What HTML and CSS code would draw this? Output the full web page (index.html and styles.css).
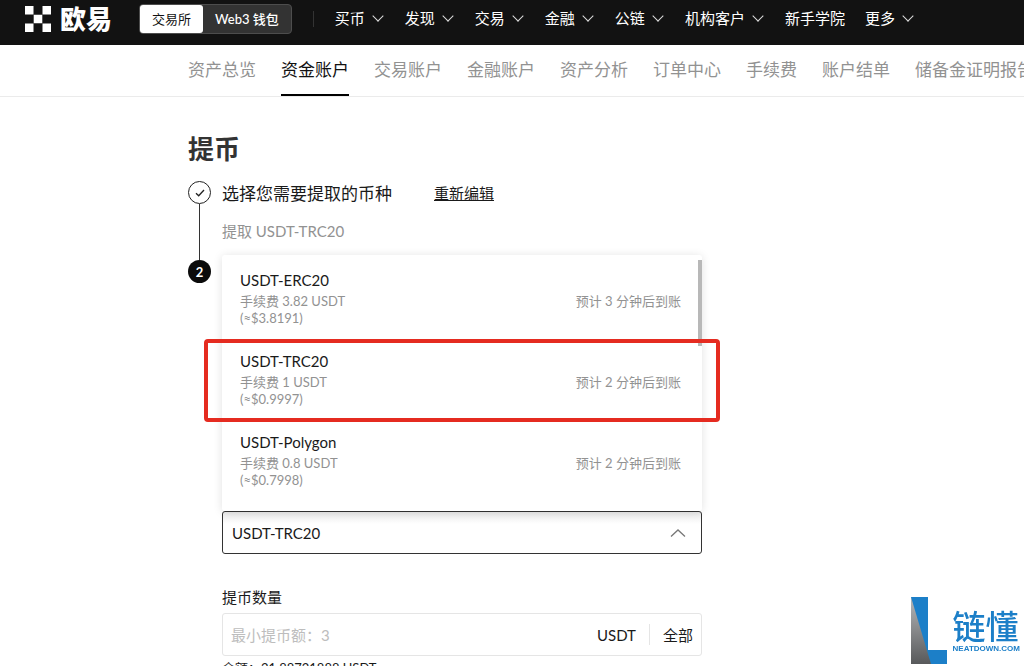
FILE: index.html
```html
<!DOCTYPE html>
<html lang="zh-CN">
<head>
    <meta charset="UTF-8">
    <meta name="viewport" content="width=device-width, initial-scale=1.0">
    <title>提币</title>
    <link rel="stylesheet" href="styles.css">
</head>
<body>

    <!-- Top bar -->
    <header class="topbar">
        <a href="#" class="logo">
            <svg width="26" height="26" viewBox="0 0 26 26" fill="#fff" aria-hidden="true">
                <path d="M0 0h8.500v8.500H0zM17.500 0H26v8.500h-8.500zM8.700 8.700h8.600v8.600H8.700zM0 17.500h8.500V26H0zM17.500 17.500H26V26h-8.500z"/>
            </svg>
            <span>欧易</span>
        </a>
        <div class="switch">
            <button class="on">交易所</button>
            <button>Web3 钱包</button>
        </div>
        <span class="divider"></span>
        <nav class="menu">
            <a href="#" class="has-sub">买币</a>
            <a href="#" class="has-sub">发现</a>
            <a href="#" class="has-sub">交易</a>
            <a href="#" class="has-sub">金融</a>
            <a href="#" class="has-sub">公链</a>
            <a href="#" class="has-sub">机构客户</a>
            <a href="#">新手学院</a>
            <a href="#" class="has-sub">更多</a>
        </nav>
    </header>

    <!-- Asset tabs -->
    <nav class="tabs">
        <a href="#">资产总览</a>
        <a href="#" class="active">资金账户</a>
        <a href="#">交易账户</a>
        <a href="#">金融账户</a>
        <a href="#">资产分析</a>
        <a href="#">订单中心</a>
        <a href="#">手续费</a>
        <a href="#">账户结单</a>
        <a href="#">储备金证明报告</a>
    </nav>

    <main class="page">
        <h1>提币</h1>

        <!-- Step 1 -->
        <section class="step">
            <div class="rail">
                <span class="dot done">
                    <svg width="12" height="12" viewBox="0 0 12 12" fill="none" stroke="#222" stroke-width="1.300" aria-hidden="true">
                        <path d="M2 6.300l2.700 2.500L10 3"/>
                    </svg>
                </span>
                <span class="line"></span>
            </div>
            <div class="step-body">
                <div class="step-head">
                    <h2>选择您需要提取的币种</h2>
                    <a href="#">重新编辑</a>
                </div>
                <p class="summary">提取 USDT-TRC20</p>
            </div>
        </section>

        <!-- Step 2 -->
        <section class="step">
            <div class="rail">
                <span class="dot">2</span>
            </div>
            <div class="step-body form">
                <ul class="networks">
                    <li>
                        <div>
                            <h3>USDT-ERC20</h3>
                            <p>手续费 3.82 USDT</p>
                            <p>(≈$3.8191)</p>
                        </div>
                        <span>预计 3 分钟后到账</span>
                    </li>
                    <li class="marked">
                        <div>
                            <h3>USDT-TRC20</h3>
                            <p>手续费 1 USDT</p>
                            <p>(≈$0.9997)</p>
                        </div>
                        <span>预计 2 分钟后到账</span>
                    </li>
                    <li>
                        <div>
                            <h3>USDT-Polygon</h3>
                            <p>手续费 0.8 USDT</p>
                            <p>(≈$0.7998)</p>
                        </div>
                        <span>预计 2 分钟后到账</span>
                    </li>
                </ul>
                <div class="select">
                    <select aria-label="提币网络">
                        <option>USDT-ERC20</option>
                        <option selected>USDT-TRC20</option>
                        <option>USDT-Polygon</option>
                    </select>
                    <svg width="16" height="10" viewBox="0 0 16 10" fill="none" stroke="#777" stroke-width="1.300" aria-hidden="true">
                        <path d="M1 8.500L8 2l7 6.500"/>
                    </svg>
                </div>

                <label class="amount-label" for="amount">提币数量</label>
                <div class="amount">
                    <input type="text" id="amount" placeholder="最小提币额：3">
                    <span>USDT</span>
                    <button>全部</button>
                </div>
                <p class="balance">余额：21.88721888 USDT</p>
            </div>
        </section>
    </main>

    <!-- Site mark -->
    <div class="mark">
        <svg width="37" height="67" viewBox="0 0 37 67" aria-hidden="true">
            <defs>
                <linearGradient id="steel" x1="0" y1="0" x2="0" y2="1">
                    <stop offset="0" stop-color="#b5b7b9"/>
                    <stop offset="1" stop-color="#58595b"/>
                </linearGradient>
            </defs>
            <path d="M0 0h17v53h19v14H0z" fill="#1c7fc8"/>
            <path d="M0 0l20 67H0z" fill="url(#steel)"/>
        </svg>
        <div>
            <strong>链懂</strong>
            <small>NEATDOWN.COM</small>
        </div>
    </div>

</body>
</html>
```

FILE: styles.css
```css
* {
    box-sizing: border-box;
}

body {
    margin: 0;
    font-family: Lato, "Noto Sans CJK SC", sans-serif;
    font-size: 15px;
    color: #1a1a1a;
    background: #fff;
    overflow: hidden;
}

h1, h2, h3, p, ul {
    margin: 0;
    padding: 0;
    font-weight: normal;
}

a {
    color: inherit;
    text-decoration: none;
}

button, input, select {
    font: inherit;
    color: inherit;
    background: none;
    border: none;
    padding: 0;
}

/* Top bar */
.topbar {
    display: flex;
    align-items: center;
    height: 45px;
    padding: 0 25px 8px;
    background: #121212;
    color: #fff;
    white-space: nowrap;
}

.logo {
    display: flex;
    align-items: center;
    gap: 9px;
    width: 114px;
}

.logo span {
    font-size: 26px;
    line-height: 30px;
    font-weight: 900;
}

.switch {
    display: flex;
    height: 30px;
    border: 1px solid #4d4d4d;
    border-radius: 4px;
    background: #333;
    font-size: 13px;
}

.switch button {
    padding: 0 12px;
    border-radius: 3px;
    font-weight: 500;
}

.switch .on {
    background: #fff;
    color: #111;
    font-weight: normal;
}

.divider {
    width: 1px;
    height: 16px;
    margin: 0 21px;
    background: #333;
}

.menu {
    display: flex;
    gap: 20px;
    padding-bottom: 2px;
}

.has-sub::after {
    content: "";
    display: inline-block;
    width: 7px;
    height: 7px;
    margin: 0 3px 4px 9px;
    border: solid #ddd;
    border-width: 0 1px 1px 0;
    transform: rotate(45deg);
}

/* Tabs */
.tabs {
    display: flex;
    gap: 25px;
    height: 52px;
    padding-left: 188px;
    border-bottom: 1px solid #ebebeb;
    overflow: hidden;
    font-size: 17px;
    line-height: 50px;
    color: #929292;
    white-space: nowrap;
}

.tabs .active {
    color: #111;
    border-bottom: 2px solid #000;
}

/* Page */
.page {
    padding: 32px 188px 0;
}

.page h1 {
    margin-bottom: 12px;
    font-size: 26px;
    line-height: 40px;
    font-weight: bold;
    color: #333;
}

.step {
    display: flex;
    gap: 11px;
}

.rail {
    display: flex;
    flex-direction: column;
    align-items: center;
    width: 23px;
}

.dot {
    display: flex;
    align-items: center;
    justify-content: center;
    width: 23px;
    height: 23px;
    border-radius: 50%;
    background: #0b0b0b;
    color: #fff;
    font-size: 13px;
    font-weight: bold;
}

.dot.done {
    background: #fff;
    border: 1px solid #222;
}

.line {
    flex: 1;
    width: 1px;
    background: #333;
}

.step-body {
    flex: 1;
    max-width: 480px;
}

.step-head {
    display: flex;
    align-items: center;
    gap: 42px;
    height: 22px;
}

.step-head h2 {
    font-size: 17px;
}

.step-head a {
    text-decoration: underline;
}

.summary {
    margin: 15px 0 16px;
    line-height: 26px;
    color: #929292;
}

/* Network list */
.form {
    margin-top: -5px;
}

.networks {
    position: relative;
    z-index: 1;
    padding: 2px 0 11px;
    list-style: none;
    border-radius: 3px;
    box-shadow: 0 1px 10px rgba(0, 0, 0, 0.12);
}

/* scroll thumb */
.networks::after {
    content: "";
    position: absolute;
    top: 5px;
    right: 0;
    width: 4px;
    height: 86px;
    background: #b8b8b8;
}

.networks li {
    display: flex;
    justify-content: space-between;
    align-items: flex-start;
    padding: 11px 21px 11px 18px;
    font-size: 13px;
    line-height: 17px;
    color: #929292;
}

.networks h3 {
    margin-bottom: 1px;
    font-size: 15px;
    line-height: 24px;
    color: #1a1a1a;
}

.networks span {
    margin-top: 25px;
}

.marked {
    position: relative;
}

.marked::after {
    content: "";
    position: absolute;
    z-index: 1;
    inset: 1px -18px -3px;
    border: 4px solid #e52b20;
    border-radius: 4px;
}

.select {
    position: relative;
}

.select select {
    display: block;
    appearance: none;
    width: 100%;
    height: 43px;
    padding: 0 9px;
    border: 1px solid #333;
    border-radius: 3px;
    background: linear-gradient(#e9e9e9, #fff 12px);
}

.select svg {
    position: absolute;
    top: 17px;
    right: 16px;
}

/* Amount */
.amount-label {
    display: block;
    margin-top: 31px;
    line-height: 24px;
}

.amount {
    display: flex;
    align-items: center;
    height: 43px;
    margin-top: 4px;
    padding: 0 8px;
    border: 1px solid #e5e5e5;
    border-radius: 3px;
}

.amount input {
    flex: 1;
    min-width: 0;
}

.amount input::placeholder {
    color: #bdbdbd;
}

.amount button {
    margin-left: 13px;
    padding-left: 13px;
    border-left: 1px solid #e5e5e5;
}

.balance {
    font-size: 13px;
    line-height: 24px;
}

/* Site mark */
.mark {
    position: fixed;
    right: 4px;
    bottom: 2px;
    display: flex;
    align-items: center;
    gap: 5px;
    color: #1c7fc8;
}

.mark strong, .mark small {
    display: block;
}

.mark strong {
    font-size: 33px;
    line-height: 36px;
    font-weight: 500;
}

.mark small {
    font: bold 8px "Liberation Sans", sans-serif;
}
```
